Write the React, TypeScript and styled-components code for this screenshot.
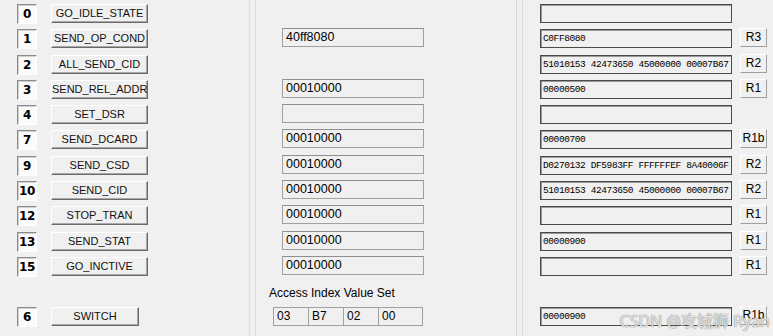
import React from "react";
import styled, { createGlobalStyle } from "styled-components";

const Global = createGlobalStyle`
  html, body { margin: 0; padding: 0; background: #f0f0f0; }
  * { box-sizing: border-box; }
`;

type Cmd = { no: string; name: string; arg?: string; resp: string; kind: string };

const cmds: Cmd[] = [
  { no: "0", name: "GO_IDLE_STATE", resp: "", kind: "" },
  { no: "1", name: "SEND_OP_COND", arg: "40ff8080", resp: "C0FF8080", kind: "R3" },
  { no: "2", name: "ALL_SEND_CID", resp: "51010153 42473650 45000000 00007B67", kind: "R2" },
  { no: "3", name: "SEND_REL_ADDR", arg: "00010000", resp: "00000500", kind: "R1" },
  { no: "4", name: "SET_DSR", arg: "", resp: "", kind: "" },
  { no: "7", name: "SEND_DCARD", arg: "00010000", resp: "00000700", kind: "R1b" },
  { no: "9", name: "SEND_CSD", arg: "00010000", resp: "D0270132 DF5983FF FFFFFFEF 8A40006F", kind: "R2" },
  { no: "10", name: "SEND_CID", arg: "00010000", resp: "51010153 42473650 45000000 00007B67", kind: "R2" },
  { no: "12", name: "STOP_TRAN", arg: "00010000", resp: "", kind: "R1" },
  { no: "13", name: "SEND_STAT", arg: "00010000", resp: "00000900", kind: "R1" },
  { no: "15", name: "GO_INCTIVE", arg: "00010000", resp: "", kind: "R1" },
];

const Page = styled.div`
  position: relative;
  display: flex;
  gap: 5px;
  width: 773px;
  height: 336px;
  overflow: hidden;
  background: #f0f0f0;
  font-family: "Liberation Sans", Arial, sans-serif;
  color: #000;
`;

const LeftPanel = styled.div`
  flex: 0 0 250px;
  border-right: 1px solid #d7d7d7;
  padding: 4px 0 0 17px;
  display: flex;
  flex-direction: column;
`;

const MiddlePanel = styled.div`
  flex: 0 0 262px;
  border-left: 1px solid #dcdcdc;
  border-right: 1px solid #d7d7d7;
  padding: 4px 0 0 26px;
  display: flex;
  flex-direction: column;
`;

const RightPanel = styled.div`
  flex: 1 1 auto;
  border-left: 1px solid #dcdcdc;
  padding: 4px 0 0 17px;
  display: flex;
  flex-direction: column;
`;

const Rows = styled.div`
  display: grid;
  grid-auto-rows: 25.3px;
`;

const Row = styled.div<{ $gap?: number }>`
  display: flex;
  align-items: flex-start;
  gap: ${(p) => p.$gap ?? 0}px;
`;

const Footer = styled.div<{ $top: number }>`
  margin-top: ${(p) => p.$top}px;
  display: flex;
  flex-direction: column;
`;

const NumBox = styled.div`
  width: 20px;
  height: 20px;
  border: 1px solid;
  border-color: #8c8c8c #ffffff #ffffff #8c8c8c;
  box-shadow: inset 1px 1px 0 #d0d0d0;
  background: #fbfbfb;
  font-family: "DejaVu Sans", Verdana, sans-serif;
  font-weight: bold;
  font-size: 12px;
  line-height: 19px;
  text-align: center;
  letter-spacing: -0.3px;
`;

const CmdButton = styled.div<{ $w?: number }>`
  width: ${(p) => p.$w ?? 97}px;
  height: 19px;
  border: 1px solid;
  border-color: #ffffff #6a6a6a #6a6a6a #ffffff;
  box-shadow: inset -1px -1px 0 #a8a8a8;
  background: #f0f0f0;
  font-size: 11px;
  line-height: 17px;
  text-align: center;
  white-space: nowrap;
  overflow: hidden;
  color: #111;
`;

const ArgField = styled.div`
  width: 142px;
  height: 19px;
  margin-top: -1px;
  border: 1px solid #a0a0a0;
  border-top-color: #8f8f8f;
  background: #f0f0f0;
  padding-left: 3px;
  font-size: 12.5px;
  line-height: 17px;
  white-space: nowrap;
`;

const RespField = styled.div`
  width: 192px;
  height: 19px;
  border: 1px solid #4a4a4a;
  box-shadow: inset 1px 1px 0 #9a9a9a;
  background: #f0f0f0;
  padding-left: 2px;
  font-family: "Liberation Mono", "Courier New", monospace;
  font-size: 9.5px;
  letter-spacing: -0.4px;
  line-height: 17px;
  white-space: nowrap;
  overflow: hidden;
`;

const KindButton = styled.div`
  width: 27px;
  height: 19px;
  margin-top: -1px;
  border: 1px solid;
  border-color: #ffffff #a0a0a0 #a0a0a0 #ffffff;
  background: #f0f0f0;
  font-size: 12px;
  line-height: 17px;
  text-align: center;
  white-space: nowrap;
  overflow: hidden;
`;

const FieldLabel = styled.div`
  margin-left: -13px;
  font-size: 12px;
  line-height: 14px;
  height: 21px;
  white-space: nowrap;
`;

const Cells = styled.div`
  display: flex;
  margin-left: -9px;
`;

const Cell = styled.div<{ $w: number }>`
  width: ${(p) => p.$w}px;
  height: 19px;
  border: 1px solid #a0a0a0;
  margin-right: -1px;
  background: #f0f0f0;
  padding-left: 3px;
  font-size: 12px;
  line-height: 17px;
`;

const Watermark = styled.div`
  position: absolute;
  right: 3px;
  bottom: 4px;
  font-family: "Noto Sans", "Noto Sans CJK SC", sans-serif;
  font-size: 16px;
  color: rgba(255, 255, 255, 0.75);
  text-shadow: 0 0 1px #888, 0 0 1px #888;
  white-space: nowrap;
  pointer-events: none;
`;

export default function App() {
  return (
    <>
      <Global />
      <Page>
        <LeftPanel>
          <Rows>
            {cmds.map((c) => (
              <Row key={c.no} $gap={14}>
                <NumBox>{c.no}</NumBox>
                <CmdButton>{c.name}</CmdButton>
              </Row>
            ))}
          </Rows>
          <Footer $top={24.7}>
            <Row $gap={14}>
              <NumBox>6</NumBox>
              <CmdButton $w={88}>SWITCH</CmdButton>
            </Row>
          </Footer>
        </LeftPanel>
        <MiddlePanel>
          <Rows>
            {cmds.map((c) => (
              <Row key={c.no}>{c.arg !== undefined && <ArgField>{c.arg}</ArgField>}</Row>
            ))}
          </Rows>
          <Footer $top={4}>
            <FieldLabel>Access Index Value Set</FieldLabel>
            <Cells>
              <Cell $w={36}>03</Cell>
              <Cell $w={36}>B7</Cell>
              <Cell $w={36}>02</Cell>
              <Cell $w={45}>00</Cell>
            </Cells>
          </Footer>
        </MiddlePanel>
        <RightPanel>
          <Rows>
            {cmds.map((c) => (
              <Row key={c.no} $gap={8}>
                <RespField>{c.resp}</RespField>
                {c.kind && <KindButton>{c.kind}</KindButton>}
              </Row>
            ))}
          </Rows>
          <Footer $top={24.7}>
            <Row $gap={8}>
              <RespField>00000900</RespField>
              <KindButton>R1b</KindButton>
            </Row>
          </Footer>
        </RightPanel>
        <Watermark>CSDN @攻城狮 Ryan</Watermark>
      </Page>
    </>
  );
}
